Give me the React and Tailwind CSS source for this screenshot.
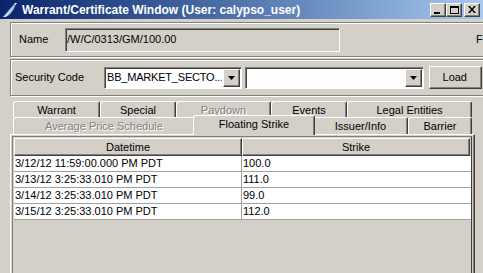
import React from "react";

const raised =
  "border border-t-white border-l-white border-r-[#404040] border-b-[#404040] shadow-[inset_-1px_-1px_0_#808080]";
const sunken =
  "border border-t-[#808080] border-l-[#808080] border-r-white border-b-white shadow-[inset_1px_1px_0_#404040]";
const etched =
  "border border-[#808080] shadow-[inset_1px_1px_0_#fff,1px_1px_0_#fff]";
const disabledText = "text-[#808080] [text-shadow:1px_1px_0_#fff]";

function Arrow() {
  return (
    <svg width="7" height="4" viewBox="0 0 7 4">
      <path d="M0 0h7L3.5 4z" fill="#000" />
    </svg>
  );
}

function Combo({ w, btn, text }) {
  return (
    <div className={`h-[22px] ${sunken} bg-white flex items-stretch`} style={{ width: w }}>
      <div className="flex-1 flex items-center pl-[2px] overflow-hidden whitespace-nowrap tracking-[-0.2px]">{text}</div>
      <div className={`bg-[#d4d0c8] ${raised} flex items-center justify-center m-[1px]`} style={{ width: btn }}>
        <Arrow />
      </div>
    </div>
  );
}

function Tab({ w, label, disabled }) {
  return (
    <div
      className={`h-full flex items-center justify-center border-t border-l border-t-white border-l-white border-r border-r-[#404040] rounded-tl-[3px] rounded-tr-[2px] shadow-[inset_-1px_0_0_#808080] ${disabled ? disabledText : "text-black"}`}
      style={{ width: w }}
    >
      <span className="pt-[1px]">{label}</span>
    </div>
  );
}

const rows = [
  ["3/12/12 11:59:00.000 PM PDT", "100.0"],
  ["3/13/12 3:25:33.010 PM PDT", "111.0"],
  ["3/14/12 3:25:33.010 PM PDT", "99.0"],
  ["3/15/12 3:25:33.010 PM PDT", "112.0"],
];

export default function App() {
  return (
    <div className="w-[483px] h-[273px] overflow-hidden bg-[#d4d0c8] text-[11px] leading-none text-black font-['Liberation_Sans',Arial,sans-serif] flex flex-col">
      {/* Title bar */}
      <div className="h-[19px] shrink-0 bg-gradient-to-r from-[#0a246a] to-[#a6caf0] flex items-center pl-[2px] pr-[3px]">
        <svg width="16" height="16" viewBox="0 0 16 16" className="shrink-0">
          <path d="M1 15L13 1h2L4 15z" fill="#ffffff" />
          <path d="M1 15c4-1 8-5 11-12l1 1C11 10 7 14 3 15z" fill="#9cc3f0" />
          <path d="M2 14L13 2" stroke="#4a7fd0" strokeWidth="1" />
        </svg>
        <span className="ml-[4px] text-white font-bold text-[12px] whitespace-nowrap">
          Warrant/Certificate Window (User: calypso_user)
        </span>
        <div className="ml-auto flex items-center">
          <div className={`w-[16px] h-[14px] bg-[#d4d0c8] ${raised} flex items-end justify-start pl-[3px] pb-[2px]`}>
            <div className="w-[6px] h-[2px] bg-black" />
          </div>
          <div className={`w-[16px] h-[14px] bg-[#d4d0c8] ${raised} flex items-center justify-center`}>
            <div className="w-[9px] h-[8px] border border-black border-t-2" />
          </div>
          <div className={`ml-[2px] w-[16px] h-[14px] bg-[#d4d0c8] ${raised} flex items-center justify-center`}>
            <svg width="8" height="7" viewBox="0 0 8 7">
              <path d="M0 0h2l2 2.5L6 0h2L5 3.5 8 7H6L4 4.5 2 7H0l3-3.5z" fill="#000" />
            </svg>
          </div>
        </div>
      </div>

      {/* Name panel */}
      <div className={`mt-[3px] ml-[10px] w-[490px] h-[35px] shrink-0 ${etched} flex items-center`}>
        <span className="ml-[8px] w-[46px]">Name</span>
        <div className={`w-[275px] h-[24px] ${sunken} bg-[#d4d0c8] flex items-center pl-[1px]`}>
          /W/C/0313/GM/100.00
        </div>
        <span className="ml-[136px]">F</span>
      </div>

      {/* Security panel */}
      <div className={`mt-[2px] ml-[10px] w-[490px] h-[37px] shrink-0 ${etched} flex items-center`}>
        <span className="ml-[4px] w-[89px]">Security Code</span>
        <Combo w={138} btn={17} text="BB_MARKET_SECTO..." />
        <div className="w-[3px]" />
        <Combo w={179} btn={17} text="" />
        <div className="w-[5px]" />
        <div className={`w-[53px] h-[23px] bg-[#d4d0c8] ${raised} flex items-center justify-end pr-[14px]`}>
          Load
        </div>
      </div>

      {/* Tabs */}
      <div className="mt-[5px] ml-[13px] h-[16px] shrink-0 flex">
        <Tab w={87} label="Warrant" />
        <Tab w={76} label="Special" />
        <Tab w={95} label="Paydown" disabled />
        <Tab w={76} label="Events" />
        <Tab w={125} label="Legal Entities" />
      </div>
      <div className="ml-[13px] h-[17px] shrink-0 flex">
        <Tab w={182} label="Average Price Schedule" disabled />
        <div
          className="relative z-10 -mx-[2px] -mt-[2px] h-[20px] bg-[#d4d0c8] flex items-start justify-center pt-[3px] border-t border-l border-t-white border-l-white border-r border-r-[#404040] rounded-tl-[3px] rounded-tr-[2px] shadow-[inset_-1px_0_0_#808080]"
          style={{ width: 122 }}
        >
          Floating Strike
        </div>
        <Tab w={95} label="Issuer/Info" />
        <Tab w={64} label="Barrier" />
      </div>

      {/* Tab panel */}
      <div className="ml-[10px] w-[465px] flex-1 border-t border-l border-white border-r border-r-[#404040] shadow-[inset_-1px_0_0_#808080] pl-[1px] pr-[2px] pt-[1px]">
        <div className="h-full border-t border-l border-[#808080] border-r border-r-[#404040] pl-[1px] pt-[1px] flex flex-col">
          <div className="flex h-[18px] shrink-0">
            <div className={`w-[228px] ${raised} bg-[#d4d0c8] flex items-center justify-center`}>Datetime</div>
            <div className={`w-[228px] ${raised} bg-[#d4d0c8] flex items-center justify-center`}>Strike</div>
          </div>
          {rows.map((r, i) => (
            <div key={i} className="flex h-[16px] shrink-0 bg-white border-b border-[#a0a0a0]">
              <div className="w-[228px] border-r border-[#a0a0a0] flex items-center pl-[1px] whitespace-nowrap">{r[0]}</div>
              <div className="w-[228px] flex items-center pl-[1px]">{r[1]}</div>
            </div>
          ))}
        </div>
      </div>
    </div>
  );
}
